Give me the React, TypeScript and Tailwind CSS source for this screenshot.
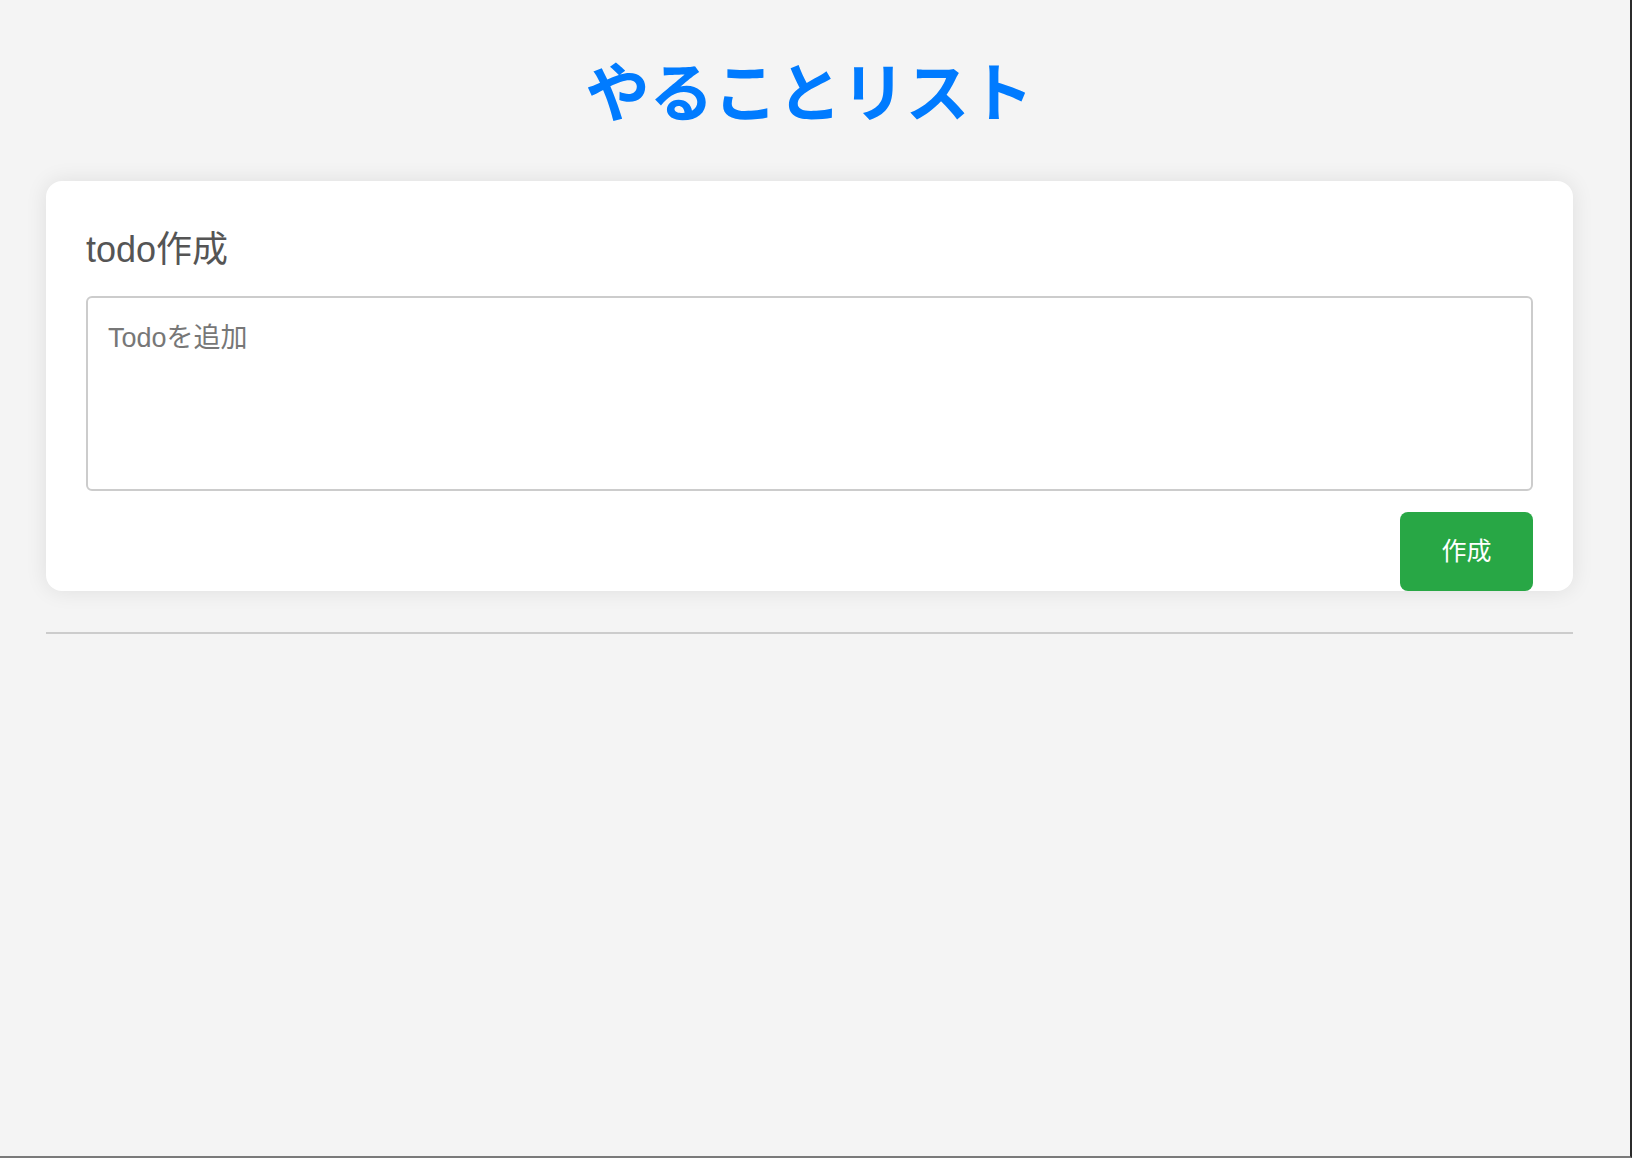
import React, { useState } from "react";

const FONT = "font-['Liberation_Sans','Noto_Sans_CJK_JP',sans-serif]";

const App: React.FC = () => {
  const [text, setText] = useState("");

  return (
    <div
      className={`h-[1158px] w-full overflow-hidden bg-[#f4f4f4] border-r-2 border-b-2 border-r-[#2b2b2b] border-b-[#7a7a7a] ${FONT}`}
    >
      <div className="ml-[46px] w-[1527px]">
        {/* Title */}
        <h1 className="pt-[57px] text-center text-[64px] font-bold leading-[74px] text-[#007bff]">
          やることリスト
        </h1>

        {/* Create card */}
        <div className="mt-[50px] rounded-2xl bg-white px-[40px] pt-[40px] shadow-[0_0_22px_rgba(0,0,0,0.09)]">
          <h2 className="mb-[17px] text-[36px] leading-[58px] text-[#555555]">todo作成</h2>
          <textarea
            className="block h-[195px] w-full resize-none rounded-md border-2 border-[#cccccc] px-[20px] pt-[20px] pb-[16px] text-[27px] leading-[40px] text-[#333] outline-none placeholder:text-[#777777]"
            placeholder="Todoを追加"
            value={text}
            onChange={e => setText(e.target.value)}
          />
          <div className="mt-[21px] flex justify-end">
            <button
              className="h-[79px] w-[133px] rounded-lg bg-[#28a745] text-[25px] text-white"
              onClick={() => setText("")}
            >
              作成
            </button>
          </div>
        </div>

        {/* Divider */}
        <hr className="mt-[41px] border-t-2 border-[#cccccc]" />
      </div>
    </div>
  );
};

export default App;
